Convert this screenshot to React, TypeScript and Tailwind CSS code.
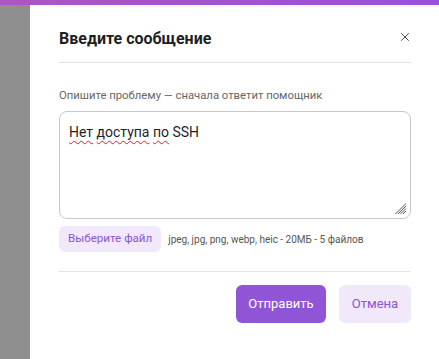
import { X } from 'lucide-react'

export default function App() {
  return (
    <div className="w-[439px] h-[359px] overflow-hidden bg-white flex flex-col font-['Roboto',sans-serif]">
      <div className="h-[5px] shrink-0 bg-gradient-to-r from-[#ad56c3] to-[#9a4edd]" />
      <div className="flex flex-1">
        <div className="w-[30px] shrink-0 bg-[#8f8f8f]" />
        <div className="flex-1 pl-[29px] pr-[28px]">
          <div className="flex items-center justify-between pt-[24px] pb-[13px] border-b border-[#e3e3e3]">
            <h2 className="text-[16px] leading-[20px] font-bold text-[#1f1f1f]">Введите сообщение</h2>
            <button className="text-[#444] -mr-[1px] mt-[-4px]">
              <X size={14} strokeWidth={1.6} />
            </button>
          </div>
          <p className="mt-[26px] text-[11.3px] text-[#666] leading-[14px]">
            Опишите проблему — сначала ответит помощник
          </p>
          <div className="relative mt-[8px] h-[108px] rounded-[8px] border border-[#c8c8cc] px-[9px] pt-[10px] text-[14px] text-[#1f1f1f]">
            <span className="underline decoration-wavy decoration-[#e0202a] decoration-1 underline-offset-[3px]">Нет</span>{' '}
            <span className="underline decoration-wavy decoration-[#e0202a] decoration-1 underline-offset-[3px]">доступа</span>{' '}
            <span className="underline decoration-wavy decoration-[#e0202a] decoration-1 underline-offset-[3px]">по</span> SSH
            <svg className="absolute right-[3px] bottom-[3px]" width="12" height="12" viewBox="0 0 12 12">
              <path d="M11 3 L3 11 M11 5.5 L5.5 11 M11 8 L8 11 M11 0.5 L0.5 11" stroke="#555" strokeWidth="1" />
            </svg>
          </div>
          <div className="flex items-center gap-[7px] mt-[7px]">
            <button className="h-[26px] px-[9px] rounded-[6px] bg-[#f1e9fb] text-[11.6px] text-[#8a55d0]">
              Выберите файл
            </button>
            <span className="text-[10px] text-[#555]">jpeg, jpg, png, webp, heic - 20МБ - 5 файлов</span>
          </div>
          <div className="mt-[19px] border-t border-[#e3e3e3]" />
          <div className="flex justify-end gap-[13px] mt-[13px]">
            <button className="h-[38px] w-[90px] rounded-[6px] bg-[#9055d6] text-[13px] text-white">Отправить</button>
            <button className="h-[38px] w-[72px] rounded-[6px] bg-[#f1e8fa] text-[13px] text-[#8a55d0]">Отмена</button>
          </div>
        </div>
      </div>
    </div>
  )
}
